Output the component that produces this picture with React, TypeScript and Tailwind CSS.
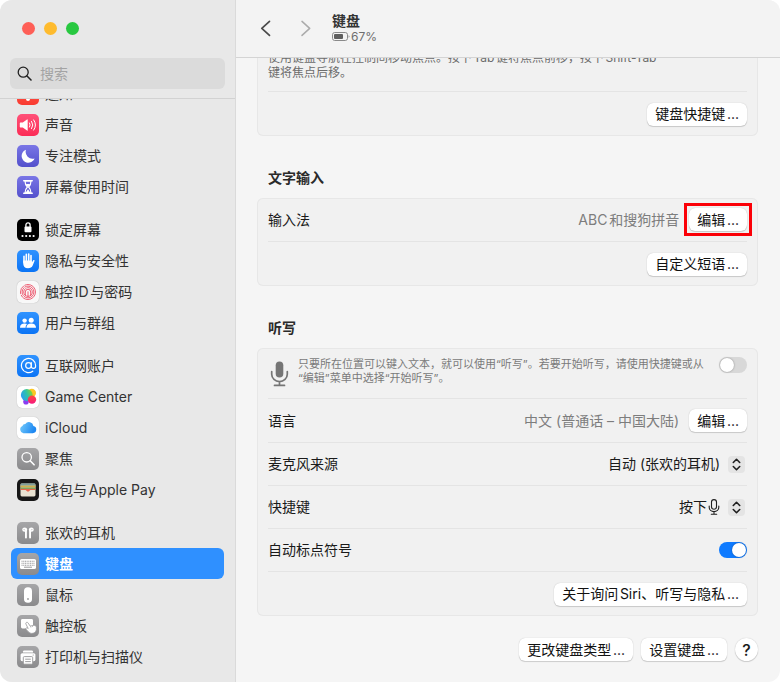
import type { ReactNode } from 'react';
import { AtSign } from 'lucide-react';

type SidebarItem = {
  label: string;
  tile: string;
  icon: ReactNode;
  active?: boolean;
};

const GRAY_TILE = 'bg-linear-to-b from-[#a6a6a8] to-[#8a8a8c]';
const BLUE_TILE = 'bg-linear-to-b from-[#2f93ff] to-[#0a74f5]';
const INDIGO_TILE = 'bg-linear-to-b from-[#7a76e6] to-[#5450cc]';
const WHITE_TILE = 'bg-white shadow-[0_0_1px_rgba(0,0,0,0.3)]';

/* Every sidebar glyph is drawn on the same 22 x 22 grid */
function Glyph({ children }: { children: ReactNode }) {
  return (
    <svg className="size-[22px]" viewBox="0 0 22 22" fill="none" aria-hidden="true">
      {children}
    </svg>
  );
}

const groups: SidebarItem[][] = [
  [
    {
      label: '通知',
      tile: 'bg-linear-to-b from-[#ff5a4f] to-[#f93a30]',
      icon: (
        <Glyph>
          <path d="M11 4a4.5 4.5 0 0 0-4.5 4.5v3.6L5 14.6h12l-1.5-2.5V8.5A4.5 4.5 0 0 0 11 4z" fill="#fff" />
          <path d="M9 16h4a2 2 0 0 1-4 0z" fill="#fff" />
        </Glyph>
      ),
    },
    {
      label: '声音',
      tile: 'bg-linear-to-b from-[#ff5078] to-[#fb2a55]',
      icon: (
        <Glyph>
          <path d="M3.4 8.6h2.4L10 5.4q.7-.4.7.4v10.4q0 .8-.7.4l-4.2-3.2H3.4q-.6 0-.6-.6V9.2q0-.6.6-.6z" fill="#fff" />
          <path d="M12.5 8.900a3.800 3.800 0 0 1 0 4.200M14.600 7.400a6.200 6.200 0 0 1 0 7.200M16.700 5.900a8.800 8.800 0 0 1 0 10.200" stroke="#fff" strokeWidth="1" strokeLinecap="round" />
        </Glyph>
      ),
    },
    {
      label: '专注模式',
      tile: INDIGO_TILE,
      icon: (
        <Glyph>
          <path d="M9 4.700A6.700 6.700 0 1 0 17.600 13.400 6.900 6.900 0 0 1 9 4.700z" fill="#fff" />
        </Glyph>
      ),
    },
    {
      label: '屏幕使用时间',
      tile: INDIGO_TILE,
      icon: (
        <Glyph>
          <path d="M6.800 4.800h8.400M6.800 17.200h8.400" stroke="#fff" strokeWidth="1.600" strokeLinecap="round" />
          <path d="M8 5c0 3.400.6 4.200 2.400 6-1.800 1.800-2.400 2.600-2.400 6h6c0-3.400-.6-4.200-2.400-6C13.400 9.200 14 8.400 14 5z" stroke="#fff" strokeWidth="1.200" />
          <path d="M8.800 8h4.400L11 11zM8.400 17 11 13.200l2.600 3.800z" fill="#fff" />
        </Glyph>
      ),
    },
  ],
  [
    {
      label: '锁定屏幕',
      tile: 'bg-black',
      icon: (
        <Glyph>
          <rect x="7.500" y="7.500" width="7" height="5.800" rx="1" fill="#fff" />
          <path d="M8.900 8V6a2.100 2.100 0 0 1 4.200 0v2" stroke="#fff" strokeWidth="1.300" />
          <g fill="#fff">
            <circle cx="5.500" cy="17" r="1.100" />
            <circle cx="9.200" cy="17" r="1.100" />
            <circle cx="12.900" cy="17" r="1.100" />
            <circle cx="16.600" cy="17" r="1.100" />
          </g>
        </Glyph>
      ),
    },
    {
      label: '隐私与安全性',
      tile: BLUE_TILE,
      icon: (
        <Glyph>
          <path d="M7 6.200v6M9.300 4.400v7M11.700 4.100v7M14 5.600v7" stroke="#fff" strokeWidth="1.600" strokeLinecap="round" />
          <path d="M6.200 10.500h8.600v2l1.300-2c.6-.8 1.700-.4 1.400.6l-1.800 4.500c-.8 1.800-2.300 2.700-4.700 2.700-3.200 0-4.800-2-4.800-5z" fill="#fff" />
        </Glyph>
      ),
    },
    {
      label: '触控ID与密码',
      tile: 'bg-[#f8f8f8] shadow-[0_0_1px_rgba(0,0,0,0.3)]',
      icon: (
        <Glyph>
          <g stroke="#ec5068" strokeWidth="0.900" strokeLinecap="round">
            <circle cx="11" cy="11" r="7.500" strokeDasharray="20 1.600 9 1.400" />
            <circle cx="11" cy="11" r="5.900" strokeDasharray="13 1.400 8 1.400" />
            <circle cx="11" cy="11" r="4.300" strokeDasharray="17 1.400" />
            <path d="M8.300 14.200v-3.200a2.700 2.700 0 0 1 5.400 0v3.600M11 10.800v4.800" />
          </g>
        </Glyph>
      ),
    },
    {
      label: '用户与群组',
      tile: BLUE_TILE,
      icon: (
        <Glyph>
          <g fill="#fff">
            <circle cx="7.600" cy="8.600" r="2.200" />
            <path d="M3 15.800c0-2.900 1.800-4.200 4.600-4.200 1 0 1.800.2 2.500.5-1 .9-1.500 2.100-1.500 3.700z" />
            <circle cx="14.200" cy="8.200" r="2.500" />
            <path d="M9.400 15.800c0-3 1.900-4.400 4.800-4.400s4.800 1.400 4.800 4.400z" />
          </g>
        </Glyph>
      ),
    },
  ],
  [
    {
      label: '互联网账户',
      tile: BLUE_TILE,
      icon: <AtSign className="size-[17px] text-white" strokeWidth={1.700} aria-hidden="true" />,
    },
    {
      label: 'Game Center',
      tile: WHITE_TILE,
      icon: (
        <Glyph>
          <defs>
            <linearGradient id="gc-main" x1="0" y1="0.600" x2="1" y2="0.200">
              <stop offset="0" stopColor="#2a9df4" />
              <stop offset="0.500" stopColor="#2fc3a8" />
              <stop offset="1" stopColor="#8bd42a" />
            </linearGradient>
            <linearGradient id="gc-pink" x1="0" y1="0" x2="0" y2="1">
              <stop offset="0" stopColor="#ff4a3c" />
              <stop offset="1" stopColor="#f6177f" />
            </linearGradient>
          </defs>
          <circle cx="14.800" cy="7" r="4.200" fill="#fbc624" />
          <circle cx="9" cy="15.800" r="2.800" fill="#8b3df0" />
          <circle cx="9.800" cy="9" r="5.900" fill="url(#gc-main)" />
          <circle cx="15" cy="13.600" r="4.200" fill="url(#gc-pink)" />
        </Glyph>
      ),
    },
    {
      label: 'iCloud',
      tile: WHITE_TILE,
      icon: (
        <Glyph>
          <defs>
            <linearGradient id="cloud" x1="0" y1="0" x2="1" y2="0.300">
              <stop offset="0" stopColor="#76cdfb" />
              <stop offset="1" stopColor="#1e88f2" />
            </linearGradient>
          </defs>
          <path d="M6.400 16.200a3.800 3.800 0 0 1-1-7.200 2.900 2.900 0 0 1 2.900-2.100 4.500 4.500 0 0 1 8.100 2 3.700 3.700 0 0 1-.6 7.300z" fill="url(#cloud)" />
        </Glyph>
      ),
    },
    {
      label: '聚焦',
      tile: GRAY_TILE,
      icon: (
        <Glyph>
          <circle cx="9.700" cy="9.300" r="4.700" stroke="#fff" strokeWidth="1.300" />
          <path d="m13.200 12.800 3.900 4" stroke="#fff" strokeWidth="1.600" strokeLinecap="round" />
        </Glyph>
      ),
    },
    {
      label: '钱包与Apple Pay',
      tile: 'bg-[#171717]',
      icon: (
        <Glyph>
          <rect x="3.500" y="4.600" width="15" height="12.800" rx="1.400" fill="#e8e2d2" />
          <path d="M3.500 6q0-1.400 1.400-1.400h12.200q1.400 0 1.400 1.400v.8h-15z" fill="#7f9f9a" />
          <path d="M3.500 6.600h15v1.800h-15z" fill="#d0b04c" />
          <path d="M3.500 8.400h15v1.700h-15z" fill="#86a35c" />
          <path d="M3.500 10.100h15v1h-5c-.7 0-1 1.600-2.500 1.600s-1.800-1.600-2.500-1.600h-5z" fill="#e8654c" />
        </Glyph>
      ),
    },
  ],
  [
    {
      label: '张欢的耳机',
      tile: GRAY_TILE,
      icon: (
        <Glyph>
          <g fill="#fff">
            <ellipse cx="7.700" cy="7.700" rx="2.500" ry="2.100" />
            <rect x="8" y="7.500" width="1.900" height="9" rx="0.900" />
            <ellipse cx="14.300" cy="7.700" rx="2.500" ry="2.100" />
            <rect x="12.100" y="7.500" width="1.900" height="9" rx="0.900" />
          </g>
          <path d="M6.900 7.200l.7 1M15.100 7.200l-.7 1" stroke="#9a9a9c" strokeWidth="0.800" />
        </Glyph>
      ),
    },
    {
      label: '键盘',
      tile: GRAY_TILE,
      active: true,
      icon: (
        <Glyph>
          <rect x="3" y="6" width="16" height="10" rx="1.600" fill="#fff" />
          <path d="M4.500 8.200h13M4.500 10.300h13M4.500 12.200h13" stroke="#98989a" strokeWidth="1.100" strokeDasharray="1.100 0.600" />
          <path d="M7 14.200h8" stroke="#98989a" strokeWidth="1" />
        </Glyph>
      ),
    },
    {
      label: '鼠标',
      tile: GRAY_TILE,
      icon: (
        <Glyph>
          <rect x="7" y="3.200" width="8" height="15.600" rx="3.800" fill="#fff" />
          <circle cx="11" cy="15" r="0.900" fill="#98989a" />
        </Glyph>
      ),
    },
    {
      label: '触控板',
      tile: GRAY_TILE,
      icon: (
        <Glyph>
          <rect x="4" y="4" width="12" height="9.500" rx="1.400" fill="#fff" />
          <path d="M9.200 7.600c.8-.6 1.500-.3 2 .5l2 3 3.600-.8c1.600-.2 2.400.8 2.600 2.200.4 2.600-.6 5.200-3.400 5.800-2.400.4-3.700-.5-5-1.900l-2-2.200c-.6-.9.4-1.800 1.400-1.200l.8.500L8.900 9c-.3-.6-.2-1.100.3-1.400z" fill="#fff" stroke="#98989a" strokeWidth="0.800" />
          <path d="M13.400 11.200l.5 1.300M15.300 10.900l.4 1.100" stroke="#98989a" strokeWidth="0.600" />
        </Glyph>
      ),
    },
    {
      label: '打印机与扫描仪',
      tile: GRAY_TILE,
      icon: (
        <Glyph>
          <path d="M6 6.400V5.600q0-1.200 1.200-1.200h7.600q1.200 0 1.200 1.200v.8z" fill="#fff" />
          <rect x="3.600" y="7.200" width="14.800" height="8" rx="1.600" fill="#fff" />
          <rect x="6.300" y="10.600" width="9.400" height="7.600" rx="1" fill="#fff" stroke="#939395" strokeWidth="0.900" />
          <path d="M8.200 13.200h5.600M8.200 15.600h5.600" stroke="#939395" strokeWidth="0.900" />
          <circle cx="16.200" cy="9" r="0.600" fill="#939395" />
        </Glyph>
      ),
    },
  ],
];

function Sidebar() {
  return (
    <aside className="flex w-[236px] shrink-0 flex-col border-r border-[#dadada] bg-[#e8e8e8]">
      <div className="border-b border-[#d2d2d2] px-[10px] pt-[22px] pb-[9px]">
        <div className="mb-[23px] flex gap-[9px] pl-3">
          <button aria-label="关闭" className="size-[13px] rounded-full bg-[#fe5f57]" />
          <button aria-label="最小化" className="size-[13px] rounded-full bg-[#febb2e]" />
          <button aria-label="缩放" className="size-[13px] rounded-full bg-[#28c840]" />
        </div>
        <label className="flex h-[31px] items-center gap-2 rounded-md bg-[#dbdbdb] px-[7px]">
          <svg className="size-[15px] shrink-0" viewBox="0 0 15 15" fill="none" aria-hidden="true">
            <circle cx="6.200" cy="6.200" r="5" stroke="#222" strokeWidth="1.300" />
            <path d="m10 10 4 4" stroke="#222" strokeWidth="1.600" strokeLinecap="round" />
          </svg>
          <input
            type="text"
            aria-label="搜索"
            placeholder="搜索"
            className="w-full min-w-0 bg-transparent outline-none placeholder:text-[#a3a3a3]"
          />
        </label>
      </div>

      {/* List is scrolled to its end, so it hangs from the bottom */}
      <nav className="flex min-h-0 flex-1 flex-col justify-end gap-3 overflow-hidden px-[11px] pb-[10px]">
        {groups.map((group, i) => (
          <ul key={i} className="shrink-0">
            {group.map((item) => (
              <li key={item.label}>
                <a
                  href="#"
                  className={
                    item.active
                      ? 'flex h-[31px] items-center gap-[6px] rounded-md bg-[#2f90ff] px-[6px] font-semibold text-white'
                      : 'flex h-[31px] items-center gap-[6px] rounded-md px-[6px] text-[#333]'
                  }
                >
                  <span className={`flex size-[22px] shrink-0 items-center justify-center rounded-[5px] ${item.tile}`}>
                    {item.icon}
                  </span>
                  {item.label}
                </a>
              </li>
            ))}
          </ul>
        ))}
      </nav>
    </aside>
  );
}

function PushButton({ children }: { children: ReactNode }) {
  return (
    <button className="h-[23px] rounded-md bg-white px-2 leading-5 text-[#111] shadow-[0_0_1px_rgba(0,0,0,0.25),0_1px_1px_rgba(0,0,0,0.15)]">
      {children}
    </button>
  );
}

function Card({ children }: { children: ReactNode }) {
  return (
    <div className="divide-y divide-[#e4e4e4] rounded-md bg-[#f1f1f1] px-[11px] ring-1 ring-[#e7e7e7] ring-inset">
      {children}
    </div>
  );
}

function SectionTitle({ children }: { children: ReactNode }) {
  return <h2 className="mt-8 mb-[10px] pl-[11px] leading-5 font-semibold text-[#2a2a2a]">{children}</h2>;
}

function ButtonRow({ label, value, children }: { label?: string; value?: string; children: ReactNode }) {
  return (
    <div className="flex h-11 items-center gap-[10px]">
      <span>{label}</span>
      <span className="ml-auto text-[#7d7d7d]">{value}</span>
      {children}
    </div>
  );
}

function Switch({ id, label, on }: { id: string; label?: string; on?: boolean }) {
  return (
    <input
      id={id}
      type="checkbox"
      role="switch"
      aria-label={label}
      defaultChecked={on}
      className="h-4 w-7 shrink-0 appearance-none rounded-full bg-[#d8d8d8] p-px before:block before:size-[14px] before:rounded-full before:bg-white before:shadow-[0_0_2px_rgba(0,0,0,0.4)] checked:bg-[#0f7bff] checked:before:ml-3"
    />
  );
}

function SelectRow({ id, label, value, icon }: { id: string; label: string; value: string; icon?: ReactNode }) {
  return (
    <div className="flex h-[43px] items-center justify-between">
      <label htmlFor={id}>{label}</label>
      <div className="relative flex items-center pr-[2px]">
        <select
          id={id}
          className={icon ? 'appearance-none bg-transparent pr-[38px] outline-none' : 'appearance-none bg-transparent pr-6 outline-none'}
        >
          <option>{value}</option>
        </select>
        <span className="pointer-events-none absolute right-[2px] flex items-center gap-2">
          {icon}
          <span className="flex size-[17px] items-center justify-center rounded bg-[#e4e4e4]">
            <svg className="h-[13px] w-[9px]" viewBox="0 0 9 13" fill="none" aria-hidden="true">
              <path d="M1.300 4.500 4.500 1.300l3.200 3.200M1.300 8.500l3.200 3.200 3.200-3.200" stroke="#1f1f1f" strokeWidth="1.600" strokeLinecap="round" strokeLinejoin="round" />
            </svg>
          </span>
        </span>
      </div>
    </div>
  );
}

function Toolbar() {
  return (
    <header className="flex h-[58px] shrink-0 items-center border-b border-[#d4d4d4] bg-[#f3f3f3] pl-5">
      <div className="flex gap-5">
        <button aria-label="后退">
          <svg className="size-5" viewBox="0 0 20 20" fill="none" aria-hidden="true">
            <path d="M13.500 2.400 5.800 9.400l7.700 7" stroke="#4a4a4a" strokeWidth="1.700" strokeLinecap="round" strokeLinejoin="round" />
          </svg>
        </button>
        <button aria-label="前进" disabled>
          <svg className="size-5" viewBox="0 0 20 20" fill="none" aria-hidden="true">
            <path d="M6 2.400l7.700 7L6 16.400" stroke="#ababab" strokeWidth="1.500" strokeLinecap="round" strokeLinejoin="round" />
          </svg>
        </button>
      </div>
      <div className="ml-4">
        <h1 className="leading-4 font-bold text-[#333]">键盘</h1>
        <p className="flex items-center gap-px text-xs leading-4 text-[#6e6e6e]">
          <svg className="h-[9px] w-[18px]" viewBox="0 0 18 9" fill="none" aria-hidden="true">
            <rect x="0.500" y="0.500" width="15" height="8" rx="2.200" stroke="#8a8a8a" />
            <rect x="2" y="2" width="9" height="5" rx="1" fill="#5e5e5e" />
            <path d="M16.600 3.200v2.600q.9-.4.900-1.300t-.9-1.300z" fill="#8a8a8a" />
          </svg>
          67%
        </p>
      </div>
    </header>
  );
}

export default function App() {
  return (
    <div className="h-screen bg-white font-['Inter','Noto_Sans_CJK_SC',sans-serif] text-sm [text-autospace:normal]" lang="zh-CN">
      <div className="flex h-full overflow-hidden rounded-xl bg-[#f5f5f5] text-[#1a1a1a]">
        <Sidebar />
        <main className="flex min-w-0 flex-1 flex-col">
          <Toolbar />
          <div className="flex min-h-0 flex-1 flex-col justify-end overflow-hidden pr-[22px] pb-[21px] pl-[21px]">
            <div className="shrink-0">
              <Card>
                <p className="pt-6 pr-20 pb-[11px] text-xs leading-[15px] text-[#6c6c6c]">
                  使用键盘导航在控制间移动焦点。按下Tab键将焦点前移，按下Shift-Tab
                  <br />
                  键将焦点后移。
                </p>
                <ButtonRow>
                  <PushButton>键盘快捷键...</PushButton>
                </ButtonRow>
              </Card>

              <SectionTitle>文字输入</SectionTitle>
              <Card>
                <ButtonRow label="输入法" value="ABC和搜狗拼音">
                  <div className="relative">
                    <PushButton>编辑...</PushButton>
                    <div className="pointer-events-none absolute -inset-[5px] border-3 border-[#fb0007]" />
                  </div>
                </ButtonRow>
                <ButtonRow>
                  <PushButton>自定义短语...</PushButton>
                </ButtonRow>
              </Card>

              <SectionTitle>听写</SectionTitle>
              <Card>
                <div className="flex h-[51px] items-start pt-[9px]">
                  <svg className="mt-1 mr-[9px] ml-[2px] h-[26px] w-[19px] shrink-0" viewBox="0 0 19 26" fill="none" aria-hidden="true">
                    <rect x="5.700" y="0.500" width="7.600" height="16" rx="3.800" fill="#757575" />
                    <path d="M1.700 10.500v2.800a7.800 7.300 0 0 0 15.600 0v-2.800M9.500 20.600v3.600M4.500 24.400h10" stroke="#757575" strokeWidth="1.700" strokeLinecap="round" />
                  </svg>
                  <p className="flex-1 text-[11px] leading-[14px] text-[#7a7a7a]">
                    只要所在位置可以键入文本，就可以使用“听写”。若要开始听写，请使用快捷键或从
                    <br />
                    “编辑”菜单中选择“开始听写”。
                  </p>
                  <Switch id="dictation" label="听写" />
                </div>
                <ButtonRow label="语言" value="中文 (普通话 – 中国大陆)">
                  <PushButton>编辑...</PushButton>
                </ButtonRow>
                <SelectRow id="mic-source" label="麦克风来源" value="自动 (张欢的耳机)" />
                <SelectRow
                  id="shortcut"
                  label="快捷键"
                  value="按下"
                  icon={
                    <svg className="h-4 w-3" viewBox="0 0 12 16" fill="none" aria-hidden="true">
                      <rect x="3.500" y="0.600" width="5" height="9.600" rx="2.500" stroke="#1f1f1f" strokeWidth="1.100" />
                      <path d="M1.200 7v1.200a4.800 4.400 0 0 0 9.600 0V7M6 12.600V15M3.300 15.200h5.400" stroke="#1f1f1f" strokeWidth="1.100" strokeLinecap="round" />
                    </svg>
                  }
                />
                <div className="flex h-[43px] items-center justify-between">
                  <label htmlFor="punctuation">自动标点符号</label>
                  <Switch id="punctuation" on />
                </div>
                <ButtonRow>
                  <PushButton>关于询问Siri、听写与隐私...</PushButton>
                </ButtonRow>
              </Card>

              <div className="mt-[22px] flex justify-end gap-2">
                <PushButton>更改键盘类型...</PushButton>
                <PushButton>设置键盘...</PushButton>
                <button
                  aria-label="帮助"
                  className="size-[23px] rounded-full bg-white text-base leading-5 font-medium shadow-[0_0_1px_rgba(0,0,0,0.25),0_1px_1px_rgba(0,0,0,0.15)]"
                >
                  ?
                </button>
              </div>
            </div>
          </div>
        </main>
      </div>
    </div>
  );
}
